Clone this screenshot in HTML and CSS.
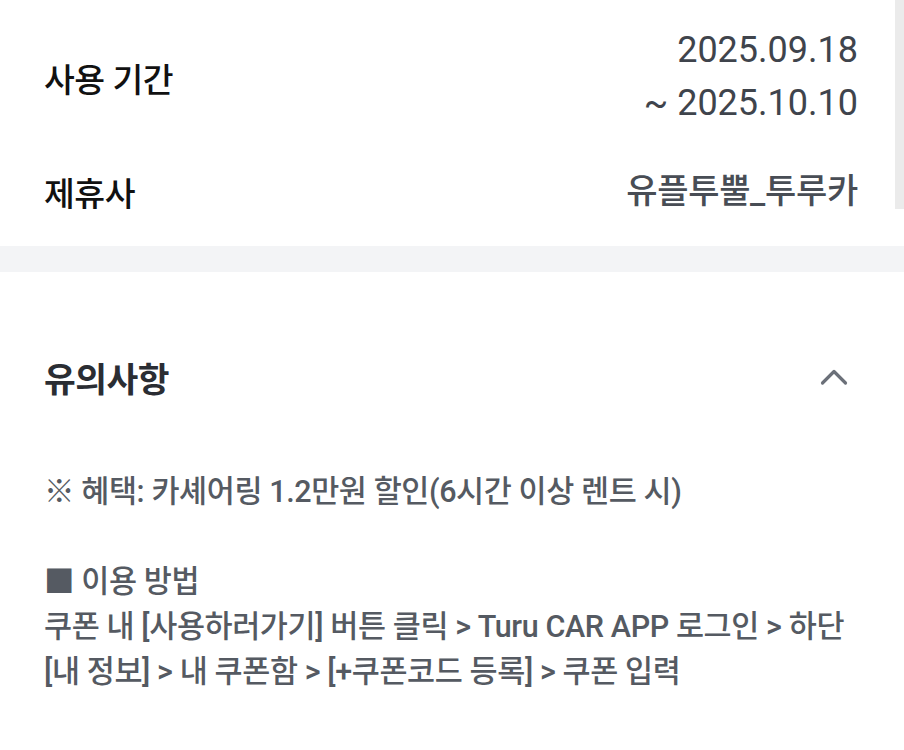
FILE: index.html
```html
<!DOCTYPE html>
<html lang="ko">
<head>
<meta charset="utf-8">
<link rel="stylesheet" href="styles.css">
</head>
<body>
<div class="top-panel">
  <div class="top-content">
    <div class="info-row first">
      <div class="label">사용 기간</div>
      <div class="value date">2025.09.18<br>~ 2025.10.10</div>
    </div>
    <div class="info-row">
      <div class="label">제휴사</div>
      <div class="value">유플투뿔_투루카</div>
    </div>
  </div>
  <div class="scrollbar"></div>
</div>
<div class="spacer"></div>
<div class="divider"></div>
<section class="notice">
  <div class="notice-head">
    <h2 class="notice-title">유의사항</h2>
    <svg class="chevron" width="28" height="18" viewBox="0 0 28 18">
      <path d="M2.5 15 L14 3.5 L25.5 15" fill="none" stroke="#6b7079" stroke-width="3.2" stroke-linecap="round" stroke-linejoin="round"/>
    </svg>
  </div>
  <div class="notice-body">
    <p>※ 혜택: 카셰어링 1.2만원 할인(6시간 이상 렌트 시)</p>
    <p class="blank">&nbsp;</p>
    <p>■ 이용 방법</p>
    <p>쿠폰 내 [사용하러가기] 버튼 클릭 &gt; Turu CAR APP 로그인 &gt; 하단</p>
    <p>[내 정보] &gt; 내 쿠폰함 &gt; [+쿠폰코드 등록] &gt; 쿠폰 입력</p>
  </div>
</section>
</body>
</html>
```

FILE: styles.css
```css
* { box-sizing: border-box; }
html, body { margin: 0; padding: 0; background: #fff; }
body {
  font-family: Roboto, "Noto Sans CJK KR", sans-serif;
  width: 904px;
  overflow: hidden;
}
.top-panel {
  display: flex;
  height: 209px;
  overflow: hidden;
}
.top-content {
  flex: 1;
  padding: 24px 37px 0 44px;
}
.scrollbar {
  width: 9px;
  background: #ebebeb;
}
.info-row {
  display: flex;
  justify-content: space-between;
  align-items: center;
}
.info-row.first { margin-bottom: 35px; }
.label {
  font-size: 33.5px;
  font-weight: 500;
  color: #111;
  letter-spacing: -0.5px;
}
.value {
  font-size: 34px;
  line-height: 53px;
  font-weight: 500;
  color: #484d55;
  text-align: right;
  letter-spacing: -0.3px;
}
.value.date {
  font-size: 36px;
  font-weight: 400;
  letter-spacing: 0;
  color: #3f444c;
}
.spacer { height: 37px; }
.divider { height: 26px; background: #f3f4f6; }
.notice { padding: 0 56px 0 44px; }
.notice-head {
  display: flex;
  justify-content: space-between;
  align-items: center;
  margin-top: 82px;
  height: 46px;
}
.notice-title {
  margin: 0;
  font-size: 34.5px;
  font-weight: 700;
  color: #2a2d33;
  letter-spacing: -0.5px;
}
.chevron { display: block; }
.notice-body {
  margin-top: 69px;
  color: #555a62;
  font-size: 30.5px;
  font-weight: 500;
  line-height: 45px;
  letter-spacing: -0.4px;
}
.notice-body p { margin: 0; white-space: nowrap; }
```
